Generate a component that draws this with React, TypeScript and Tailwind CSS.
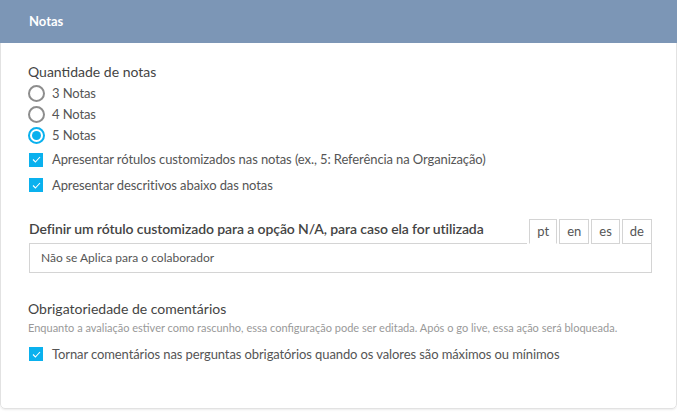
import React from "react";

const font = { fontFamily: "Lato, 'Noto Sans', sans-serif" };

function Radio({ checked, label }: { checked?: boolean; label: string }) {
  return (
    <label className="flex items-center h-[21px] gap-[7px]">
      {checked ? (
        <span className="w-[17px] h-[17px] rounded-full border-[2px] border-[#0ab1ee] flex items-center justify-center">
          <span className="w-[9px] h-[9px] rounded-full bg-[#0ab1ee]" />
        </span>
      ) : (
        <span className="w-[17px] h-[17px] rounded-full border-[2px] border-[#8d8d8d]" />
      )}
      <span className="text-[13px] text-[#555] tracking-[-0.1px]">{label}</span>
    </label>
  );
}

function Check({ label, className = "" }: { label: string; className?: string }) {
  return (
    <label className={`flex items-center gap-[9px] ${className}`}>
      <span className="w-[14px] h-[14px] bg-[#0ab1ee] flex items-center justify-center">
        <svg width="9" height="7" viewBox="0 0 9 7" fill="none">
          <path d="M1 3.5 L3.4 6 L8 1" stroke="white" strokeWidth="1.1" />
        </svg>
      </span>
      <span className="text-[13px] text-[#555] tracking-[-0.1px]">{label}</span>
    </label>
  );
}

export default function App() {
  const tabs = ["pt", "en", "es", "de"];
  return (
    <div className="w-[677px] h-[412px] bg-white" style={font}>
      <div className="h-[409px] border border-[#e2e2e2] rounded-b-[5px] shadow-[0_1px_2px_rgba(0,0,0,0.08)] flex flex-col">
        <div className="h-[43px] bg-[#7c96b6] -mx-px -mt-px flex items-center px-[29px]">
          <span className="text-white font-bold text-[13px]">Notas</span>
        </div>
        <div className="px-[27px] pt-[19px]">
          <div className="text-[14px] text-[#444] leading-[20px]">Quantidade de notas</div>
          <div className="flex flex-col mt-[1px]">
            <Radio label="3 Notas" />
            <Radio label="4 Notas" />
            <Radio checked label="5 Notas" />
          </div>
          <Check className="mt-[4px] pl-[1px]" label="Apresentar rótulos customizados nas notas (ex., 5: Referência na Organização)" />
          <Check className="mt-[6px] pl-[1px]" label="Apresentar descritivos abaixo das notas" />

          <div className="mt-[24px] w-[624px] pl-px">
            <div className="flex items-end">
              <div className="flex-1 border-b border-[#d4d4d4] text-[14px] font-semibold text-[#444] pb-[5px] leading-[18px] tracking-[-0.1px]">
                Definir um rótulo customizado para a opção N/A, para caso ela for utilizada
              </div>
              <div className="w-[4px] border-b border-[#d4d4d4]" />
              {tabs.map((t, i) => (
                <div
                  key={t}
                  className={`h-[25px] px-[7px] flex items-center text-[13px] text-[#555] border border-[#d4d4d4] ml-[2px] ${
                    i === 0 ? "border-b-white bg-white" : "border-b-[#d4d4d4]"
                  }`}
                >
                  {t}
                </div>
              ))}
            </div>
            <div className="h-[29px] border border-t-0 border-[#d4d4d4] flex items-center px-[11px] text-[12px] text-[#555]">
              Não se Aplica para o colaborador
            </div>
          </div>

          <div className="mt-[26px] text-[14px] text-[#444] leading-[20px]">Obrigatoriedade de comentários</div>
          <div className="mt-[1px] text-[11px] text-[#999]">
            Enquanto a avaliação estiver como rascunho, essa configuração pode ser editada. Após o go live, essa ação será bloqueada.
          </div>
          <Check className="mt-[8px] pl-[1px]" label="Tornar comentários nas perguntas obrigatórios quando os valores são máximos ou mínimos" />
        </div>
      </div>
    </div>
  );
}
